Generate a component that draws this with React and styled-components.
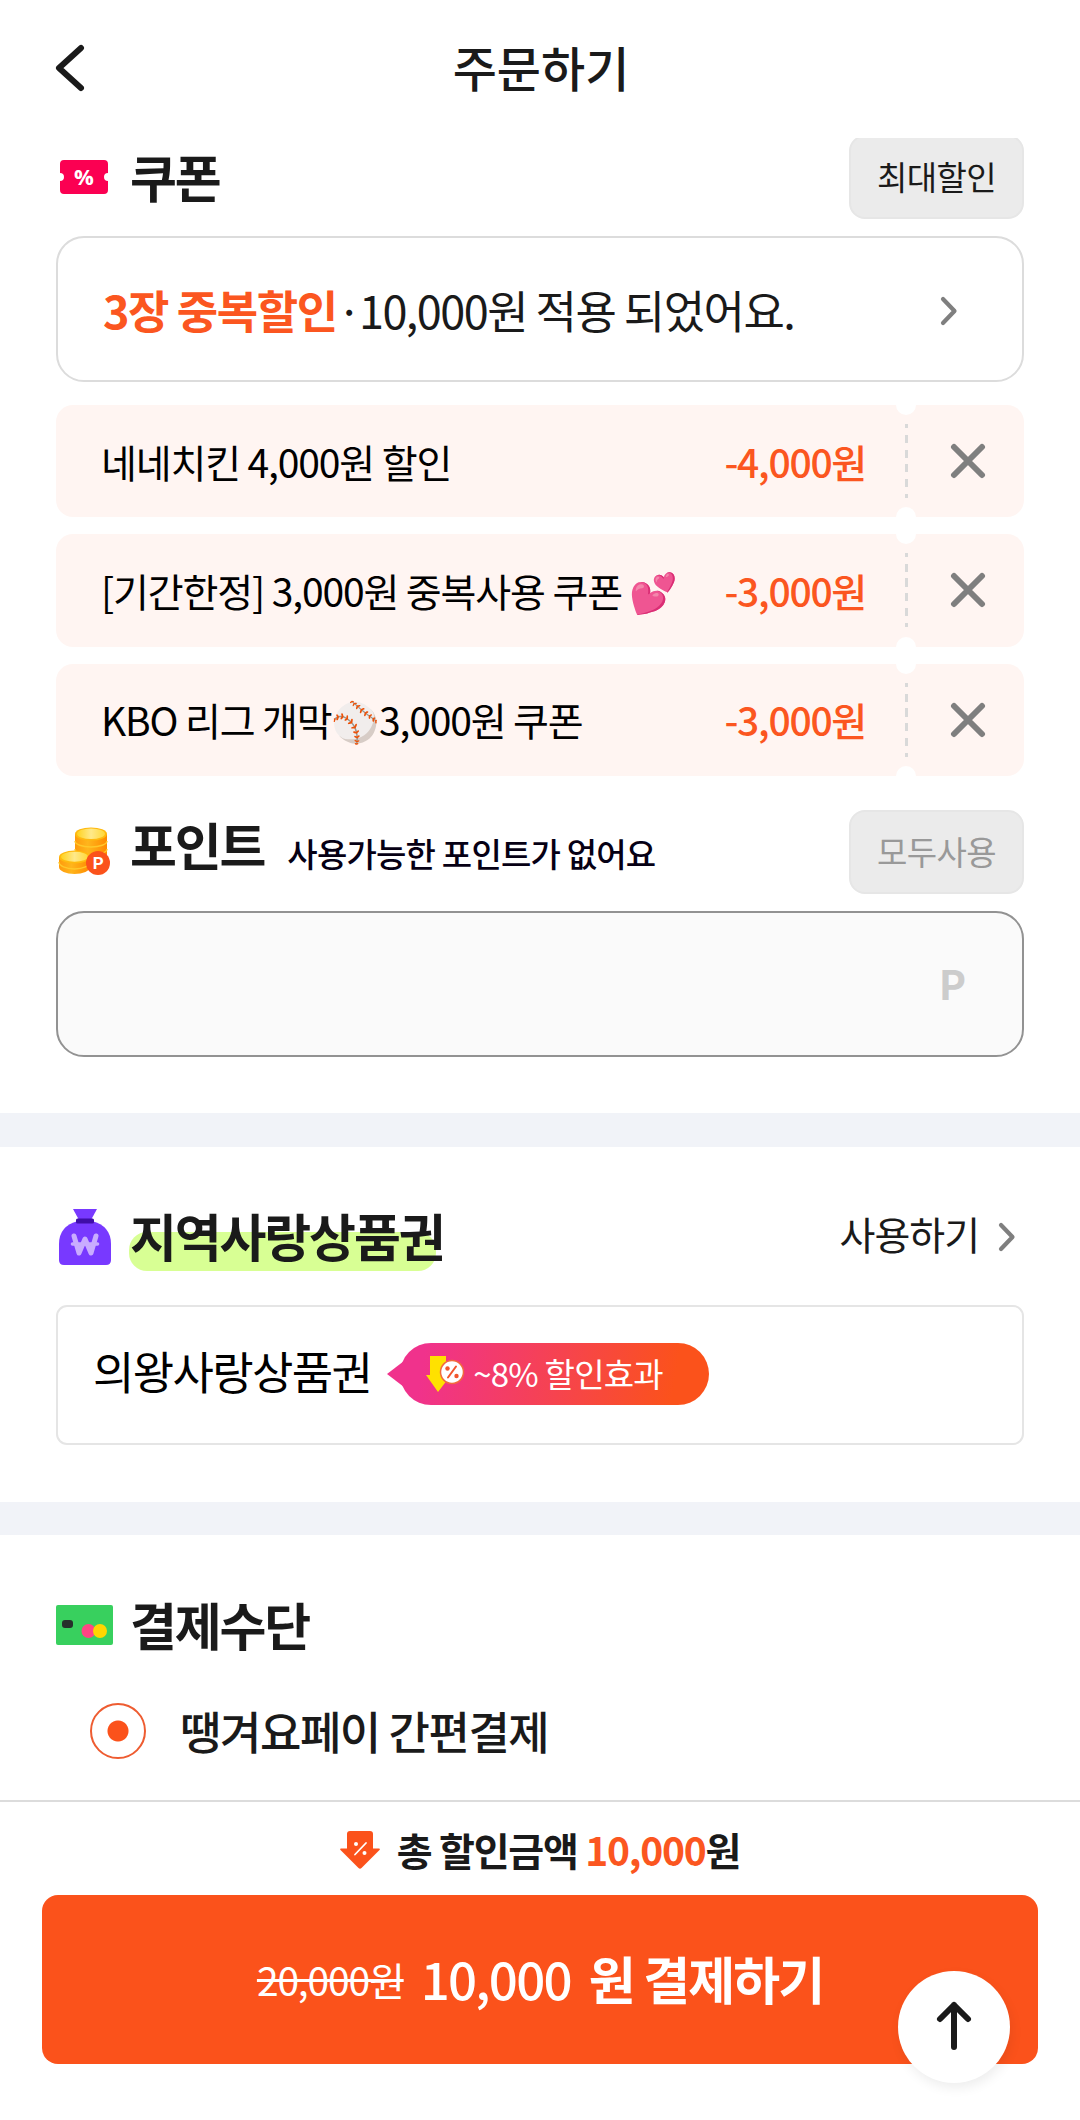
import React from 'react'
import styled, { createGlobalStyle } from 'styled-components'

const coupons = [
    { name: '네네치킨 4,000원 할인', amount: '-4,000원' },
    { name: '[기간한정] 3,000원 중복사용 쿠폰 💕', amount: '-3,000원' },
    { name: 'KBO 리그 개막⚾️3,000원 쿠폰', amount: '-3,000원' },
]

function App() {
    return (
        <Page>
            <GlobalStyle />
            <Header>
                <BackButton aria-label='뒤로'>
                    <svg width='32' height='48' viewBox='0 0 32 48'>
                        <path d='M27 4 L5 24 L27 44' fill='none' stroke='#1a1a1a' strokeWidth='6' strokeLinecap='round' strokeLinejoin='round' />
                    </svg>
                </BackButton>
                <PageTitle>주문하기</PageTitle>
            </Header>

            <CouponSection>
                <SectionHeader>
                    <IconBox $indent={3}><TicketIcon /></IconBox>
                    <SectionTitle>쿠폰</SectionTitle>
                    <SmallButton>최대할인</SmallButton>
                </SectionHeader>
                <SummaryBox>
                    <p><strong>3장 중복할인</strong><Dot>· </Dot>10,000원 적용 되었어요.</p>
                    <ChevronIcon />
                </SummaryBox>
                <CouponList>
                    {coupons.map((coupon, index) => (
                        <Coupon key={index}>
                            <CouponName>{coupon.name}</CouponName>
                            <CouponAmount>{coupon.amount}</CouponAmount>
                            <Perforation><i /></Perforation>
                            <RemoveButton aria-label='삭제'>
                                <svg width='36' height='36' viewBox='0 0 36 36'>
                                    <path d='M4 4 L32 32 M32 4 L4 32' stroke='#7f7f7f' strokeWidth='6' strokeLinecap='round' />
                                </svg>
                            </RemoveButton>
                        </Coupon>
                    ))}
                </CouponList>
                <SectionHeader>
                    <IconBox $indent={2}><CoinsIcon /></IconBox>
                    <PointTitle>포인트</PointTitle>
                    <PointNote>사용가능한 포인트가 없어요</PointNote>
                    <SmallButton disabled>모두사용</SmallButton>
                </SectionHeader>
                <PointField>P</PointField>
            </CouponSection>

            <Divider $height={34} />

            <VoucherSection>
                <SectionHeader>
                    <IconBox $indent={2}><BagIcon /></IconBox>
                    <SectionTitle><Highlight>지역사랑상품권</Highlight></SectionTitle>
                    <UseLink><span>사용하기</span><ChevronIcon /></UseLink>
                </SectionHeader>
                <VoucherBox>
                    <VoucherName>의왕사랑상품권</VoucherName>
                    <Badge>
                        <DiscountIcon />
                        <span>~8% 할인효과</span>
                    </Badge>
                </VoucherBox>
            </VoucherSection>

            <Divider $height={33} />

            <PaymentSection>
                <SectionHeader>
                    <IconBox $indent={0}><CardIcon /></IconBox>
                    <SectionTitle>결제수단</SectionTitle>
                </SectionHeader>
                <RadioRow>
                    <Radio />
                    땡겨요페이 간편결제
                </RadioRow>
            </PaymentSection>

            <Footer>
                <Total>
                    <DownIcon />
                    <p>총 할인금액 <em>10,000</em>원</p>
                </Total>
                <PayButton>
                    <OldPrice>20,000원</OldPrice>
                    <NewPrice>10,000</NewPrice>
                    <b>원 결제하기</b>
                </PayButton>
                <TopButton aria-label='맨 위로'>
                    <svg width='40' height='52' viewBox='0 0 40 52'>
                        <path d='M20 47 V5 M6 19 L20 5 L34 19' fill='none' stroke='#1a1a1a' strokeWidth='6' strokeLinecap='round' strokeLinejoin='round' />
                    </svg>
                </TopButton>
            </Footer>
        </Page>
    )
}

export default App

function ChevronIcon() {
    return (
        <svg width='18' height='32' viewBox='0 -2 18 32'>
            <path d='M3 3 L14.5 15 L3 27' fill='none' stroke='#7f7f7f' strokeWidth='4.2' strokeLinecap='round' strokeLinejoin='round' />
        </svg>
    )
}

function TicketIcon() {
    return (
        <svg width='50' height='34' viewBox='0 0 50 34'>
            <path d='M5 0 H45 Q49 0 49 4 V13 A4 4 0 0 0 49 21 V30 Q49 34 45 34 H5 Q1 34 1 30 V21 A4 4 0 0 0 1 13 V4 Q1 0 5 0Z' fill='#fb0052' />
            <text x='25' y='25' textAnchor='middle' fontSize='22' fontWeight='700' fontFamily='Open Sans, sans-serif' fill='#fff'>%</text>
        </svg>
    )
}

function CoinsIcon() {
    return (
        <svg width='54' height='50' viewBox='0 0 54 50'>
            <defs>
                <linearGradient id='coinSide' x1='0' x2='1'>
                    <stop offset='0' stopColor='#ff9a0c' />
                    <stop offset='0.4' stopColor='#ffb51c' />
                    <stop offset='1' stopColor='#ff8a00' />
                </linearGradient>
                <linearGradient id='coinTop' x1='0' x2='1'>
                    <stop offset='0' stopColor='#ffd21f' />
                    <stop offset='0.5' stopColor='#ffe98a' />
                    <stop offset='1' stopColor='#ffd83a' />
                </linearGradient>
            </defs>
            <path d='M17 7 V32 A16 7 0 0 0 49 32 V7Z' fill='url(#coinSide)' />
            <path d='M17 14 A16 6 0 0 0 49 14 M17 22 A16 6 0 0 0 49 22' fill='none' stroke='#ffc82a' strokeWidth='1.4' />
            <ellipse cx='33' cy='7' rx='16' ry='6.600' fill='#ffb90f' />
            <ellipse cx='33' cy='6.800' rx='14' ry='5.200' fill='url(#coinTop)' />
            <path d='M1 30 V40 A15.5 7 0 0 0 32 40 V30Z' fill='url(#coinSide)' />
            <path d='M1 35 A15.5 7 0 0 0 32 35' fill='none' stroke='#ffc82a' strokeWidth='1.4' />
            <ellipse cx='16.5' cy='30' rx='15.5' ry='6.5' fill='#ffb90f' />
            <ellipse cx='16.5' cy='29.800' rx='13.5' ry='5' fill='url(#coinTop)' />
            <circle cx='40' cy='36' r='12' fill='#fb521b' />
            <text x='40.300' y='42' textAnchor='middle' fontSize='17' fontWeight='700' fontFamily='Roboto, sans-serif' fill='#fff'>P</text>
        </svg>
    )
}

function BagIcon() {
    return (
        <svg width='54' height='60' viewBox='0 -2 54 60'>
            <path d='M15 1 H39 L33 12 H21Z' fill='#7839ff' />
            <path d='M20 13 H34 Q53 18 53 36 V52 Q53 57 48 57 H6 Q1 57 1 52 V36 Q1 18 20 13Z' fill='#7839ff' />
            <rect x='18' y='10.500' width='18' height='5' rx='1.500' fill='#3f0ea8' />
            <path d='M16 28 L21 45 L27 31 L33 45 L38 28' fill='none' stroke='#c9acff' strokeWidth='5' strokeLinecap='round' strokeLinejoin='round' />
            <path d='M14.500 36 H39.500' stroke='#c9acff' strokeWidth='3.600' strokeLinecap='round' />
        </svg>
    )
}

function DiscountIcon() {
    return (
        <svg width='40' height='40' viewBox='0 0 40 40'>
            <path d='M5 2 H21 V21 H26 L13 38 L1 21 H5Z' fill='#ffe100' />
            <circle cx='27' cy='18' r='11.500' fill='#fff' stroke='#f26a3d' strokeWidth='1.500' />
            <path d='M31 12.500 L23 23.500' stroke='#f2552c' strokeWidth='2' strokeLinecap='round' />
            <circle cx='22.500' cy='14.500' r='2.200' fill='#f2552c' />
            <circle cx='31.500' cy='22' r='2.200' fill='#f2552c' />
        </svg>
    )
}

function CardIcon() {
    return (
        <svg width='58' height='40' viewBox='0 0 58 40'>
            <rect width='57' height='40' rx='2' fill='#38d05e' />
            <rect x='6' y='15' width='11' height='8' rx='3' fill='#262f2b' />
            <circle cx='32.500' cy='26' r='7' fill='#ff4684' />
            <circle cx='44' cy='26' r='7' fill='#ffd600' />
        </svg>
    )
}

function DownIcon() {
    return (
        <svg width='40' height='40' viewBox='0 0 40 40'>
            <path d='M10 1 H30 Q33 1 33 4 V18.500 H39 Q40.500 19 39.500 20 L21.500 38 Q20 39.500 18.500 38 L0.500 20 Q-0.500 19 1 18.500 H7 V4 Q7 1 10 1Z' fill='#fb521b' />
            <path d='M26 13 L15 24.500' stroke='#fff' strokeWidth='1.800' strokeLinecap='round' />
            <circle cx='16' cy='14' r='2' fill='#fff' />
            <circle cx='24.500' cy='23' r='2' fill='#fff' />
        </svg>
    )
}

const GlobalStyle = createGlobalStyle`
    * {
        box-sizing: border-box;
    }
    body {
        margin: 0;
        background: #fff;
        color: #1a1a1a;
        font-family: "Noto Sans CJK KR", "Noto Color Emoji", sans-serif;
    }
    h1, h2, p, ul {
        margin: 0;
        padding: 0;
    }
    button {
        border: none;
        background: none;
        padding: 0;
        font-family: inherit;
        color: inherit;
    }
    svg {
        display: block;
        flex-shrink: 0;
    }
`

const Page = styled.div`
    width: 1080px;
    height: 2120px;
    display: flex;
    flex-direction: column;
    overflow: hidden;
    line-height: 1;
    white-space: nowrap;
`

const Header = styled.header`
    height: 138px;
    flex-shrink: 0;
    padding: 0 54px 4px;
    display: grid;
    grid-template-columns: 100px 1fr 100px;
    align-items: center;
    background: #fff;
    z-index: 1;
`

const BackButton = styled.button`
    width: 32px;
    padding-top: 1px;
`

const PageTitle = styled.h1`
    padding: 0 0 2px 2px;
    font-size: 48px;
    font-weight: 500;
    text-align: center;
`

const CouponSection = styled.section`
    padding: 0 56px 56px;
    margin-top: -3px;
`

const SectionHeader = styled.div`
    height: 84px;
    display: flex;
    align-items: center;
`

const IconBox = styled.div`
    width: 74px;
    height: 60px;
    padding-left: ${props => props.$indent}px;
    display: flex;
    align-items: center;
    flex-shrink: 0;
`

const SectionTitle = styled.h2`
    padding-bottom: 1px;
    font-size: 51px;
    font-weight: 700;
    letter-spacing: -0.042em;
`

const PointTitle = styled(SectionTitle)`
    margin-top: -13px;
`

const PointNote = styled.span`
    margin-left: 23px;
    padding-top: 3px;
    font-size: 33px;
    font-weight: 500;
    letter-spacing: -0.024em;
    color: #060014;
`

const SmallButton = styled.button`
    width: 175px;
    height: 84px;
    margin-left: auto;
    padding-bottom: 2px;
    border: 2px solid #e6e6e6;
    border-radius: 16px;
    background: #ebebeb;
    font-size: 33px;
    letter-spacing: -0.018em;

    &:disabled {
        color: #999;
    }
`

const SummaryBox = styled.div`
    height: 146px;
    margin-top: 17px;
    padding: 1px 64px 0 45px;
    display: flex;
    align-items: center;
    justify-content: space-between;
    border: 2px solid #dcdcdc;
    border-radius: 28px;
    font-size: 45px;
    letter-spacing: -0.034em;

    strong {
        font-weight: 700;
        letter-spacing: -0.032em;
        color: #fb5620;
    }
`

const Dot = styled.span`
    word-spacing: -10px;
`

const CouponList = styled.ul`
    margin: 23px 0 34px;
    display: flex;
    flex-direction: column;
    gap: 17px;
`

const Coupon = styled.li`
    height: 112.33px;
    padding-left: 45px;
    display: flex;
    align-items: center;
    list-style: none;
    border-radius: 17px;
    background: #fff5f2;
    font-size: 39px;
`

const CouponName = styled.span`
    flex: 1;
    letter-spacing: -0.029em;
    color: #000;
`

const CouponAmount = styled.span`
    margin-right: 30px;
    font-weight: 500;
    letter-spacing: -0.032em;
    color: #fb5620;
`

const Perforation = styled.div`
    width: 20px;
    height: 100%;
    display: flex;
    flex-direction: column;
    align-items: center;
    justify-content: space-between;

    i {
        width: 3px;
        height: 74px;
        background: repeating-linear-gradient(#d9d9d9 0 4.2px, transparent 4.2px 10.8px, #d9d9d9 10.8px 14.7px);
    }

    &::before, &::after {
        content: '';
        width: 20px;
        height: 10px;
        background: #fff;
        border-radius: 0 0 10px 10px;
    }

    &::after {
        border-radius: 10px 10px 0 0;
    }
`

const RemoveButton = styled.button`
    width: 108px;
    display: flex;
    padding-left: 34px;
`

const PointField = styled.div`
    height: 146px;
    margin-top: 17px;
    padding: 0 56px 3px 0;
    display: flex;
    align-items: center;
    justify-content: flex-end;
    border: 2px solid #929292;
    border-radius: 28px;
    background: #fafafa;
    color: #ccc;
    font-size: 41px;
    font-weight: 700;
`

const Divider = styled.div`
    height: ${props => props.$height}px;
    flex-shrink: 0;
    background: #f1f3f8;
`

const VoucherSection = styled.section`
    padding: 47px 56px 57px;
`

const Highlight = styled.span`
    position: relative;
    display: block;
    z-index: 0;

    &::before {
        content: '';
        position: absolute;
        left: -1px;
        top: 22px;
        width: 307px;
        height: 39px;
        border-radius: 18px;
        background: #d8ff94;
        z-index: -1;
    }
`

const UseLink = styled.a`
    margin-left: auto;
    margin-right: 8px;
    display: flex;
    align-items: center;
    gap: 19px;
    font-size: 39px;
    letter-spacing: -0.026em;

    span {
        padding-bottom: 4px;
    }
`

const VoucherBox = styled.div`
    height: 140px;
    margin-top: 27px;
    padding: 0 0 2px 35px;
    display: flex;
    align-items: center;
    border: 2px solid #e5e5e5;
    border-radius: 11px;
    color: #000;
    font-size: 45px;
`

const VoucherName = styled.span`
    padding-bottom: 7px;
    letter-spacing: -0.037em;
`

const Badge = styled.div`
    position: relative;
    width: 309px;
    height: 62px;
    margin-left: 29px;
    padding-left: 25px;
    display: flex;
    align-items: center;
    gap: 8px;
    border-radius: 31px;
    background: linear-gradient(100deg, #f0328c 8%, #fb521b 88%);
    color: #fff;
    font-size: 33px;
    letter-spacing: -0.023em;

    span {
        padding-bottom: 1px;
    }

    &::before {
        content: '';
        position: absolute;
        left: -13px;
        top: 18px;
        border: solid transparent;
        border-width: 13px 17px 13px 0;
        border-right-color: #f0328c;
    }
`

const PaymentSection = styled.section`
    padding: 48px 56px 0;
`

const RadioRow = styled.label`
    height: 56px;
    margin: 36px 0 0 34px;
    display: flex;
    align-items: center;
    gap: 34px;
    font-size: 45px;
    font-weight: 500;
    letter-spacing: -0.032em;
`

const Radio = styled.span`
    width: 56px;
    height: 56px;
    border: 2px solid #ee5c31;
    border-radius: 50%;
    background: radial-gradient(circle, #fb521b 10px, transparent 11px);
`

const Footer = styled.footer`
    position: fixed;
    left: 0;
    top: 1800px;
    width: 1080px;
    height: 320px;
    border-top: 2px solid #dcdcdc;
    background: #fff;
`

const Total = styled.div`
    height: 93px;
    padding-top: 2px;
    display: flex;
    align-items: center;
    justify-content: center;
    gap: 17px;
    font-size: 39px;
    font-weight: 700;
    letter-spacing: -0.032em;

    em {
        font-style: normal;
        color: #fb5620;
    }
`

const PayButton = styled.button`
    width: 996px;
    height: 169px;
    margin: 0 42px;
    padding-bottom: 2px;
    display: flex;
    align-items: center;
    justify-content: center;
    border-radius: 16px;
    background: #fb521b;
    color: #fff;
    font-size: 51px;
    letter-spacing: -0.039em;
    line-height: 1;
`

const OldPrice = styled.s`
    margin-right: 17px;
    padding-top: 1px;
    font-size: 39px;
    letter-spacing: -0.03em;
`

const NewPrice = styled.span`
    margin-right: 18px;
    font-weight: 500;
    letter-spacing: -0.034em;
`

const TopButton = styled.button`
    position: absolute;
    left: 898px;
    top: 169px;
    width: 112px;
    height: 112px;
    padding-bottom: 3px;
    display: flex;
    align-items: center;
    justify-content: center;
    border-radius: 50%;
    background: #fff;
    box-shadow: 2px 5px 12px rgba(0, 0, 0, 0.07);
`
